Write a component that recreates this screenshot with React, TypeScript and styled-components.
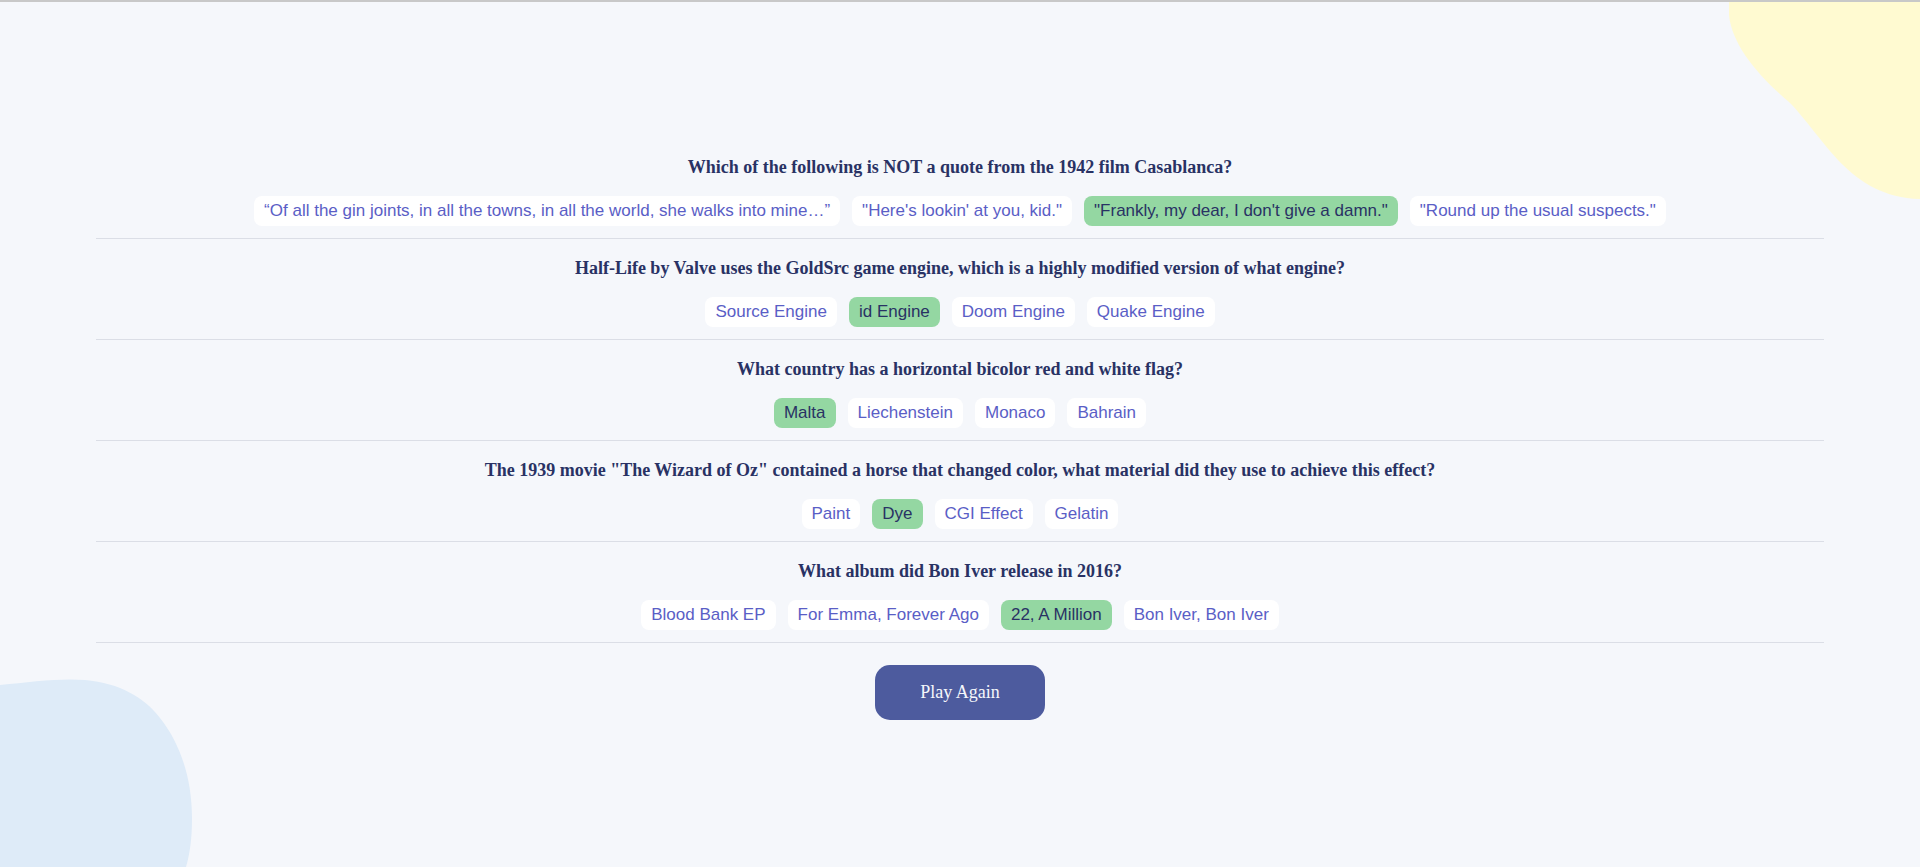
import React from "react";
import styled, { createGlobalStyle } from "styled-components";

const GlobalStyle = createGlobalStyle`
  html, body {
    margin: 0;
    padding: 0;
  }
  body {
    background: #f5f7fb;
    border-top: 2px solid #c8c8c8;
    min-height: 865px;
    overflow: hidden;
  }
`;

const Page = styled.main`
  position: relative;
  min-height: 865px;
  padding-top: 136px;
  box-sizing: border-box;
  overflow: hidden;
`;

const BlobTop = styled.svg`
  position: absolute;
  top: 0;
  right: 0;
  width: 191px;
  height: 200px;
  z-index: 0;
`;

const BlobBottom = styled.svg`
  position: absolute;
  left: 0;
  bottom: 0;
  width: 195px;
  height: 189px;
  z-index: 0;
`;

const Quiz = styled.section`
  position: relative;
  z-index: 1;
  width: 90%;
  margin: 0 auto;
  display: flex;
  flex-direction: column;
  align-items: stretch;
`;

const QuestionBlock = styled.div`
  display: flex;
  flex-direction: column;
  align-items: center;
  padding-top: 18.5px;
  padding-bottom: 12.5px;
  border-bottom: 1px solid #dbdee6;
`;

const Question = styled.h2`
  margin: 0 0 19px;
  font-family: "Liberation Serif", "Times New Roman", serif;
  font-weight: 700;
  font-size: 18px;
  line-height: 20px;
  color: #293264;
  text-align: center;
`;

const Answers = styled.div`
  display: flex;
  justify-content: center;
  gap: 12px;
`;

const Answer = styled.button<{ $selected?: boolean }>`
  height: 30px;
  padding: 0 10px;
  border: none;
  border-radius: 8px;
  background: ${(p) => (p.$selected ? "#94d7a2" : "#ffffff")};
  color: ${(p) => (p.$selected ? "#293264" : "#5a5ec6")};
  font-family: "Liberation Sans", Arial, sans-serif;
  font-size: 17px;
  line-height: 30px;
  cursor: pointer;
  white-space: nowrap;
`;

const Footer = styled.div`
  display: flex;
  justify-content: center;
  padding-top: 22px;
`;

const PlayButton = styled.button`
  width: 170px;
  height: 55px;
  border: none;
  border-radius: 15px;
  background: #4d5b9e;
  color: #f5f7fb;
  font-family: "Liberation Serif", "Times New Roman", serif;
  font-size: 18px;
  cursor: pointer;
`;

type Q = { question: string; answers: string[]; selected: number };

const questions: Q[] = [
  {
    question: "Which of the following is NOT a quote from the 1942 film Casablanca?",
    answers: [
      "\u201cOf all the gin joints, in all the towns, in all the world, she walks into mine\u2026\u201d",
      "\"Here's lookin' at you, kid.\"",
      "\"Frankly, my dear, I don't give a damn.\"",
      "\"Round up the usual suspects.\"",
    ],
    selected: 2,
  },
  {
    question:
      "Half-Life by Valve uses the GoldSrc game engine, which is a highly modified version of what engine?",
    answers: ["Source Engine", "id Engine", "Doom Engine", "Quake Engine"],
    selected: 1,
  },
  {
    question: "What country has a horizontal bicolor red and white flag?",
    answers: ["Malta", "Liechenstein", "Monaco", "Bahrain"],
    selected: 0,
  },
  {
    question:
      "The 1939 movie \"The Wizard of Oz\" contained a horse that changed color, what material did they use to achieve this effect?",
    answers: ["Paint", "Dye", "CGI Effect", "Gelatin"],
    selected: 1,
  },
  {
    question: "What album did Bon Iver release in 2016?",
    answers: ["Blood Bank EP", "For Emma, Forever Ago", "22, A Million", "Bon Iver, Bon Iver"],
    selected: 2,
  },
];

export default function App() {
  return (
    <>
      <GlobalStyle />
      <Page>
        <BlobTop viewBox="0 0 191 200" aria-hidden="true">
          <path
            d="M0,0 C-4,35 25,70 60,100 C95,135 120,195 191,197 L191,0 Z"
            fill="#fffad1"
          />
        </BlobTop>
        <BlobBottom viewBox="0 0 195 189" aria-hidden="true">
          <path
            d="M0,7 C30,4 60,0 85,2 C120,5 145,20 160,40 C180,65 192,100 192,140 C192,160 190,175 186,189 L0,189 Z"
            fill="#deebf8"
          />
        </BlobBottom>
        <Quiz>
          {questions.map((q) => (
            <QuestionBlock key={q.question}>
              <Question>{q.question}</Question>
              <Answers>
                {q.answers.map((a, i) => (
                  <Answer key={a} $selected={i === q.selected}>
                    {a}
                  </Answer>
                ))}
              </Answers>
            </QuestionBlock>
          ))}
          <Footer>
            <PlayButton>Play Again</PlayButton>
          </Footer>
        </Quiz>
      </Page>
    </>
  );
}
